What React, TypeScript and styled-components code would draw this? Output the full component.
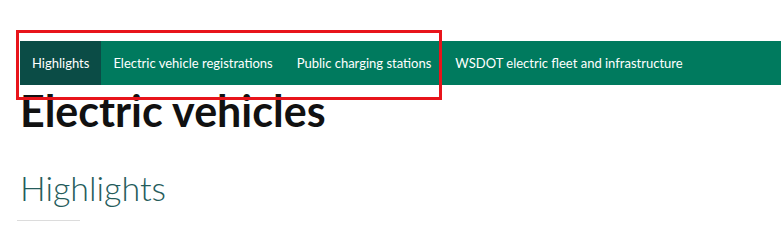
import React from 'react';
import styled, { createGlobalStyle } from 'styled-components';

const GlobalStyle = createGlobalStyle`
  body {
    margin: 0;
    background: #ffffff;
    font-family: Lato, "Open Sans", sans-serif;
  }
`;

const Page = styled.div({
  position: 'relative',
  padding: '41px 0 0 20px',
  overflow: 'hidden',
  height: '252px',
  boxSizing: 'border-box',
});

const Nav = styled.nav({
  display: 'flex',
  alignItems: 'stretch',
  height: '44px',
  background: '#007a5e',
  width: '800px',
});

const NavItem = styled.a<{ $active?: boolean }>(({ $active }) => ({
  display: 'flex',
  alignItems: 'center',
  padding: '0 12px',
  fontSize: '13px',
  color: '#ffffff',
  textDecoration: 'none',
  whiteSpace: 'nowrap',
  background: $active ? '#0b4c46' : 'transparent',
}));

const Title = styled.h1({
  margin: '2px 0 0',
  fontSize: '43px',
  lineHeight: '48px',
  fontWeight: 700,
  color: '#111111',
});

const Section = styled.h2({
  margin: '33px 0 0',
  fontSize: '34px',
  lineHeight: '40px',
  fontWeight: 300,
  color: '#255c5b',
});

const Rule = styled.hr({
  margin: '12px 0 0 -3px',
  width: '63px',
  border: 0,
  borderTop: '1px solid #dcdcdc',
});

const Callout = styled.div({
  position: 'absolute',
  left: '16px',
  top: '30px',
  width: '426px',
  height: '70px',
  border: '3px solid #e8141b',
  boxSizing: 'border-box',
  pointerEvents: 'none',
});

const tabs = [
  'Highlights',
  'Electric vehicle registrations',
  'Public charging stations',
  'WSDOT electric fleet and infrastructure',
];

const App = () => (
  <>
    <GlobalStyle />
    <Page>
      <Nav>
        {tabs.map((tab, i) => (
          <NavItem key={tab} href="#" $active={i === 0}>
            {tab}
          </NavItem>
        ))}
      </Nav>
      <Title>Electric vehicles</Title>
      <Section>Highlights</Section>
      <Rule />
      <Callout />
    </Page>
  </>
);

export default App;
